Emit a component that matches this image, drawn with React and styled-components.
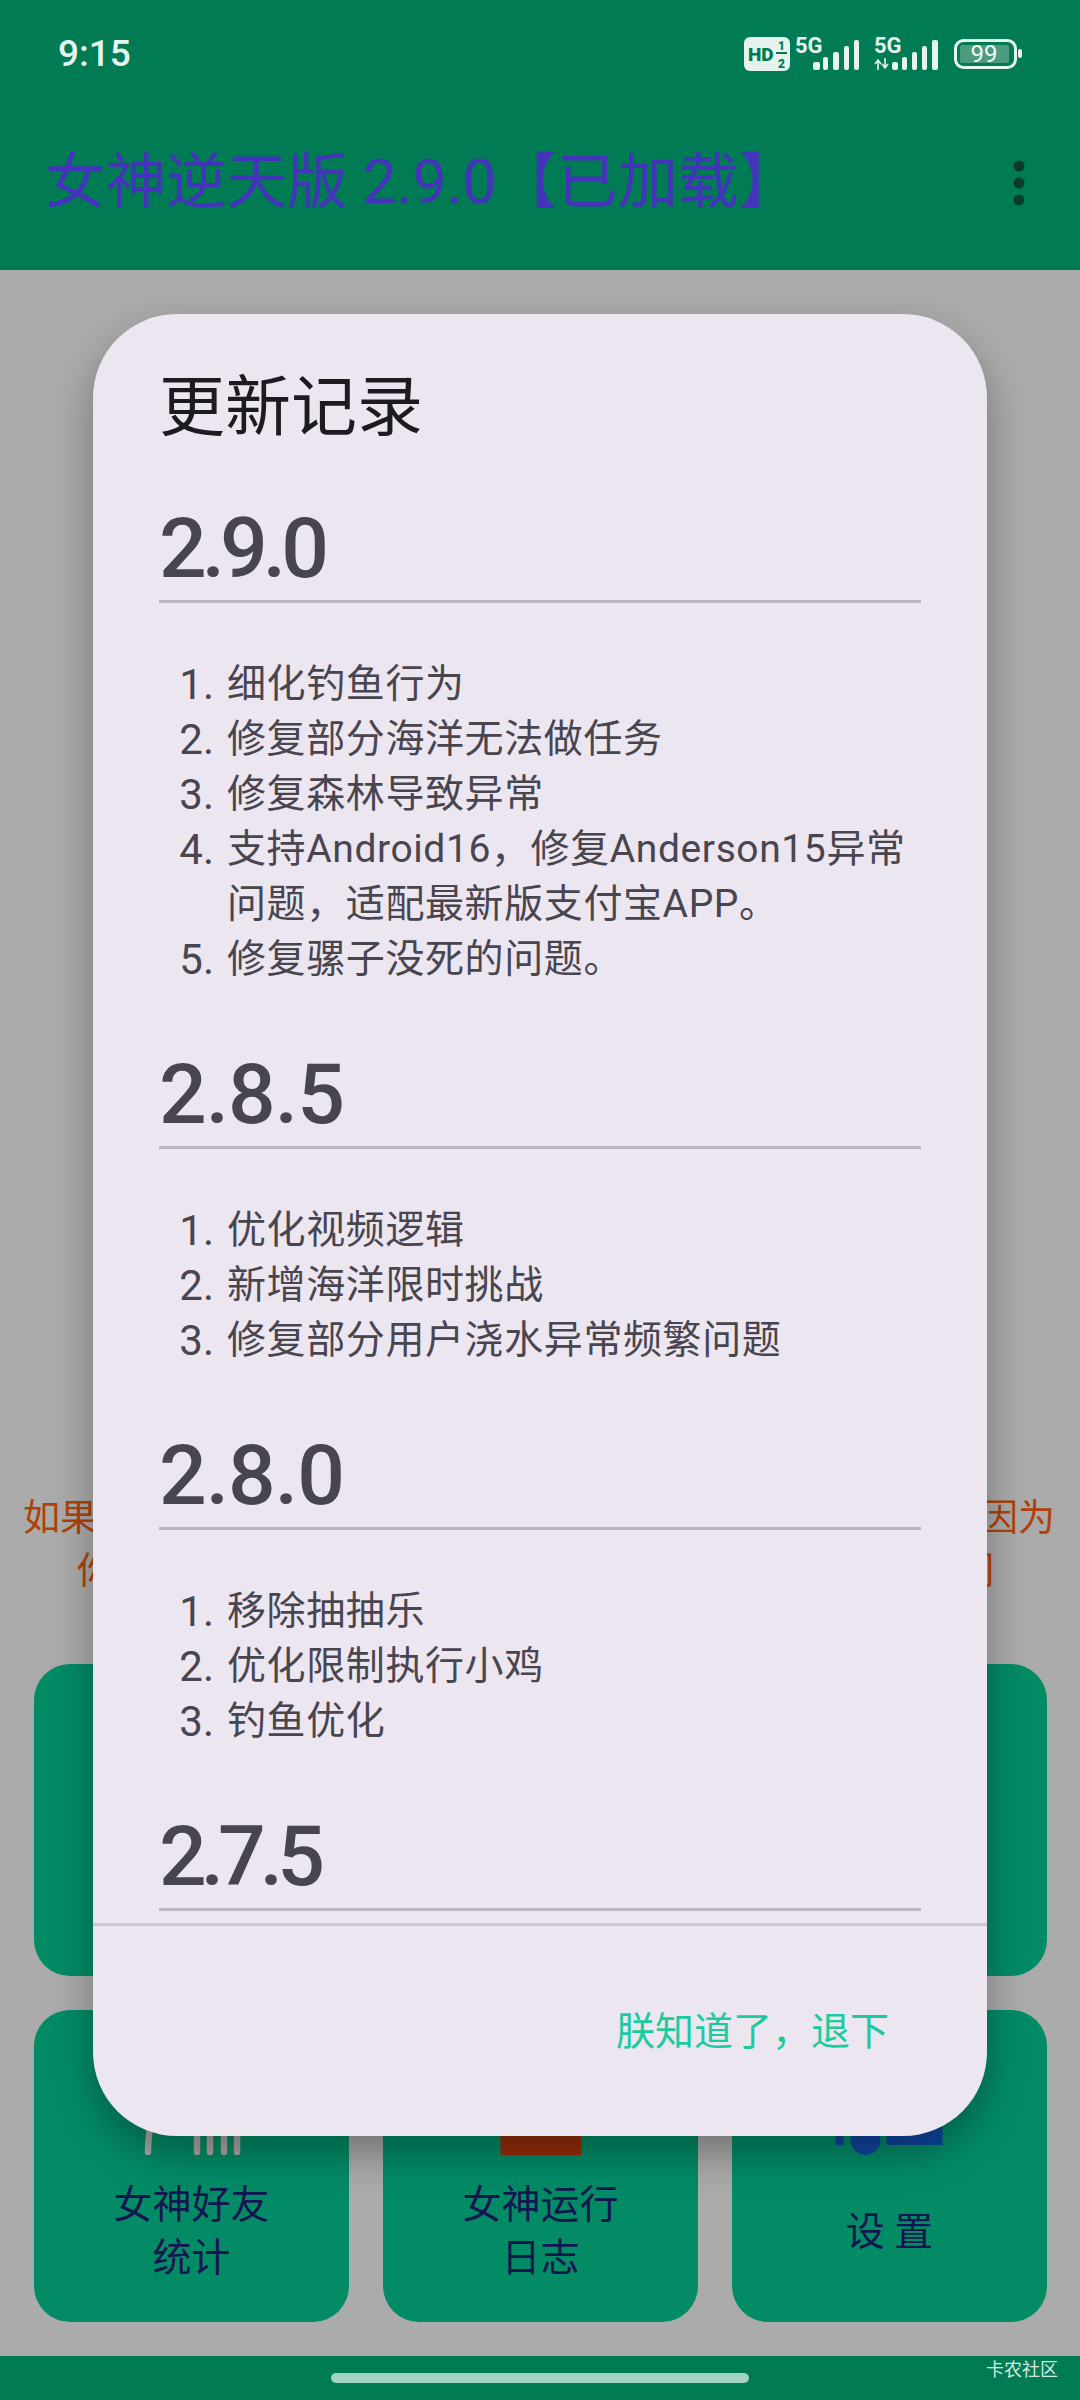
import React from "react";
import styled, { createGlobalStyle } from "styled-components";

const fontStack = `Roboto, "Noto Sans CJK SC", sans-serif`;

const releases = [
    {
        version: "2.9.0",
        tracking: -5,
        items: [
            "细化钓鱼行为",
            "修复部分海洋无法做任务",
            "修复森林导致异常",
            "支持Android16，修复Anderson15异常问题，适配最新版支付宝APP。",
            "修复骡子没死的问题。",
        ],
    },
    {
        version: "2.8.5",
        tracking: -1,
        items: ["优化视频逻辑", "新增海洋限时挑战", "修复部分用户浇水异常频繁问题"],
    },
    {
        version: "2.8.0",
        tracking: -1,
        items: ["移除抽抽乐", "优化限制执行小鸡", "钓鱼优化"],
    },
    { version: "2.7.5", tracking: -6, items: [] },
];

const StatusIcons = () => (
    <svg width="340" height="60" viewBox="0 0 340 60">
        <rect x="24" y="17" width="46" height="34" rx="6" fill="#E6F4EE" />
        <text x="28" y="41" fontFamily="Roboto" fontWeight="900" fontSize="19" fill="#017B54">HD</text>
        <text x="58" y="30" fontFamily="Roboto" fontWeight="900" fontSize="12" fill="#017B54">1</text>
        <text x="58" y="48" fontFamily="Roboto" fontWeight="900" fontSize="12" fill="#017B54">2</text>
        <rect x="56" y="32" width="11" height="2" fill="#017B54" />

        <text x="75" y="33" fontFamily="Roboto" fontWeight="700" fontSize="22" fill="#E6F4EE">5G</text>
        <g fill="#E6F4EE">
            <rect x="93" y="42" width="7" height="8" rx="2" />
            <rect x="103" y="37" width="5" height="13" rx="2" />
            <rect x="113" y="32" width="6" height="18" rx="2" />
            <rect x="124" y="26" width="5" height="24" rx="2" />
            <rect x="134" y="20" width="5" height="30" rx="2" />
        </g>

        <text x="154" y="33" fontFamily="Roboto" fontWeight="700" fontSize="22" fill="#E6F4EE">5G</text>
        <path d="M158 50v-9m-3 3l3-4 3 4M165 38v9m-3-3l3 4 3-4" stroke="#E6F4EE" strokeWidth="1.6" fill="none" />
        <g fill="#E6F4EE">
            <rect x="172" y="42" width="6" height="8" rx="2" />
            <rect x="182" y="37" width="5" height="13" rx="2" />
            <rect x="192" y="32" width="5" height="18" rx="2" />
            <rect x="202" y="26" width="5" height="24" rx="2" />
            <rect x="212" y="20" width="6" height="30" rx="2" />
        </g>

        <rect x="235.5" y="20.5" width="60" height="27" rx="8" fill="none" stroke="#E6F4EE" strokeWidth="3" />
        <rect x="240" y="25" width="49" height="18" rx="2" fill="#4C9B7E" />
        <text x="264" y="42" textAnchor="middle" fontFamily="Roboto" fontSize="24" fill="#F2FAF6">99</text>
        <rect x="298" y="29" width="4" height="9" rx="2" fill="#E6F4EE" />
    </svg>
);

const MoreIcon = () => (
    <svg width="14" height="46" viewBox="0 0 14 46">
        <circle cx="7" cy="6" r="5.5" fill="#0B3B2C" />
        <circle cx="7" cy="23" r="5.5" fill="#0B3B2C" />
        <circle cx="7" cy="40" r="5.5" fill="#0B3B2C" />
    </svg>
);

const FriendsIcon = () => (
    <svg width="140" height="96" viewBox="0 0 140 96">
        <g fill="none" stroke="#ACA8A8" strokeWidth="6.5" strokeLinecap="round">
            <path d="M32 50 Q26 72 26 93" />
            <path d="M75 50V93M88 50V93M102 50V93M115 50V93" />
        </g>
    </svg>
);

const LogIcon = () => (
    <svg width="140" height="96" viewBox="0 0 140 96">
        <rect x="29.5" y="40" width="81" height="56" rx="1" fill="#962E08" />
    </svg>
);

const SettingsIcon = () => (
    <svg width="140" height="96" viewBox="0 0 140 96">
        <g fill="#1046A0">
            <rect x="15.5" y="50" width="8" height="36" />
            <circle cx="45.5" cy="81" r="15" />
            <rect x="66.5" y="50" width="56" height="36" />
        </g>
    </svg>
);

const App = () => {
    return (
        <Page>
            <GlobalStyle />
            <Header>
                <StatusBar>
                    <Clock>9:15</Clock>
                    <StatusIcons />
                </StatusBar>
                <Toolbar>
                    <AppTitle>女神逆天版 2.9.0【已加载】</AppTitle>
                    <MoreIcon />
                </Toolbar>
            </Header>

            <Main>
                <Notice>
                    <NoticeLine>
                        <span>如果</span>
                        <span>因为</span>
                    </NoticeLine>
                    <NoticeLine $second>
                        <span>你</span>
                        <span>们</span>
                    </NoticeLine>
                </Notice>
                <Grid>
                    <Tile />
                    <Tile />
                    <Tile />
                    <Tile>
                        <FriendsIcon />
                        <TileLabel>女神好友<br />统计</TileLabel>
                    </Tile>
                    <Tile>
                        <LogIcon />
                        <TileLabel>女神运行<br />日志</TileLabel>
                    </Tile>
                    <Tile>
                        <SettingsIcon />
                        <TileLabel>设 置</TileLabel>
                    </Tile>
                </Grid>
            </Main>

            <NavBar>
                <HomeBar />
                <Watermark>卡农社区</Watermark>
            </NavBar>

            <Overlay>
                <Dialog>
                    <DialogTitle>更新记录</DialogTitle>
                    <Scroll>
                        {releases.map((release) => (
                            <Release key={release.version}>
                                <Version $tracking={release.tracking}>{release.version}</Version>
                                {release.items.length > 0 && (
                                    <Changes>
                                        {release.items.map((item) => (
                                            <li key={item}>{item}</li>
                                        ))}
                                    </Changes>
                                )}
                            </Release>
                        ))}
                    </Scroll>
                    <Actions>
                        <DismissButton>朕知道了，退下</DismissButton>
                    </Actions>
                </Dialog>
            </Overlay>
        </Page>
    );
};

export default App;

const GlobalStyle = createGlobalStyle`
html, body {
    margin: 0;
    padding: 0;
}
body {
    font-family: ${fontStack};
}
`;

const Page = styled.div`
position: relative;
width: 1080px;
height: 2400px;
display: flex;
flex-direction: column;
overflow: hidden;
background-color: #ababab;
`;

const Header = styled.header`
height: 270px;
background-color: #017b54;
display: flex;
flex-direction: column;
`;

const StatusBar = styled.div`
height: 100px;
display: flex;
justify-content: space-between;
padding: 20px 20px 0 58px;
box-sizing: border-box;
`;

const Clock = styled.div`
font-size: 37px;
font-weight: 500;
line-height: 68px;
color: #e6f4ee;
`;

const Toolbar = styled.div`
height: 162px;
display: flex;
align-items: center;
justify-content: space-between;
padding: 4px 54px 0 45px;
box-sizing: border-box;
`;

const AppTitle = styled.div`
font-size: 60.5px;
line-height: 80px;
color: #4433bb;
`;

const Main = styled.main`
flex: 1;
display: flex;
flex-direction: column;
justify-content: flex-end;
`;

const Notice = styled.div`
font-size: 37px;
line-height: 53px;
color: #b0410a;
margin-bottom: 66px;
`;

const NoticeLine = styled.div`
display: flex;
justify-content: space-between;
padding: ${(props) => (props.$second ? "0 86px 0 77px" : "0 25px 0 23px")};
`;

const Grid = styled.div`
display: grid;
grid-template-columns: repeat(3, 315px);
grid-auto-rows: 312px;
gap: 34px;
padding: 0 34px 34px;
`;

const Tile = styled.div`
background-color: #038b66;
border-radius: 36px;
padding-top: 49px;
box-sizing: border-box;
display: flex;
flex-direction: column;
align-items: center;
`;

const TileLabel = styled.div`
margin-top: 25px;
height: 104px;
display: flex;
align-items: center;
text-align: center;
font-size: 39px;
line-height: 53px;
color: #141650;
`;

const NavBar = styled.footer`
position: relative;
height: 44px;
background-color: #017b54;
display: flex;
justify-content: center;
padding-top: 17px;
box-sizing: border-box;
`;

const HomeBar = styled.div`
width: 418px;
height: 10px;
border-radius: 5px;
background-color: #a3d3c1;
`;

const Watermark = styled.div`
position: absolute;
right: 22px;
top: 2px;
font-size: 18px;
line-height: 24px;
color: #d5e8e0;
`;

const Overlay = styled.div`
position: absolute;
inset: 0;
padding: 314px 93px 264px;
box-sizing: border-box;
display: flex;
`;

const Dialog = styled.section`
flex: 1;
min-width: 0;
display: flex;
flex-direction: column;
border-radius: 84px;
background-color: #ece6f0;
box-shadow: 0 18px 40px rgba(0, 0, 0, 0.32);
overflow: hidden;
`;

const DialogTitle = styled.h1`
margin: 0;
padding: 50px 66px 0;
font-size: 66px;
font-weight: 400;
line-height: 88px;
color: #1d1b20;
`;

const Scroll = styled.div`
flex: 1;
min-height: 0;
overflow: hidden;
padding: 47px 66px 0;
border-bottom: 3px solid #cec8d4;
`;

const Release = styled.div`
margin-bottom: 58px;
`;

const Version = styled.h2`
margin: 0;
font-size: 84px;
font-weight: 500;
line-height: 100px;
letter-spacing: ${(props) => props.$tracking}px;
color: #49454f;
padding-bottom: 1px;
border-bottom: 3px solid #bdb5c5;
`;

const Changes = styled.ol`
margin: 54px 0 0;
padding: 0;
list-style: none;
counter-reset: change;
font-size: 39px;
letter-spacing: 0.6px;
line-height: 55px;
color: #49454f;

li {
    display: grid;
    grid-template-columns: 68px 1fr;
    counter-increment: change;
}

li::before {
    content: counter(change) ".";
    font-size: 42px;
    letter-spacing: 0;
    text-align: right;
    padding-right: 13px;
}
`;

const Actions = styled.div`
height: 210px;
flex-shrink: 0;
display: flex;
align-items: center;
justify-content: flex-end;
padding: 0 98px 6px 0;
box-sizing: border-box;
`;

const DismissButton = styled.div`
font-size: 39px;
color: #1ccb9d;
`;
